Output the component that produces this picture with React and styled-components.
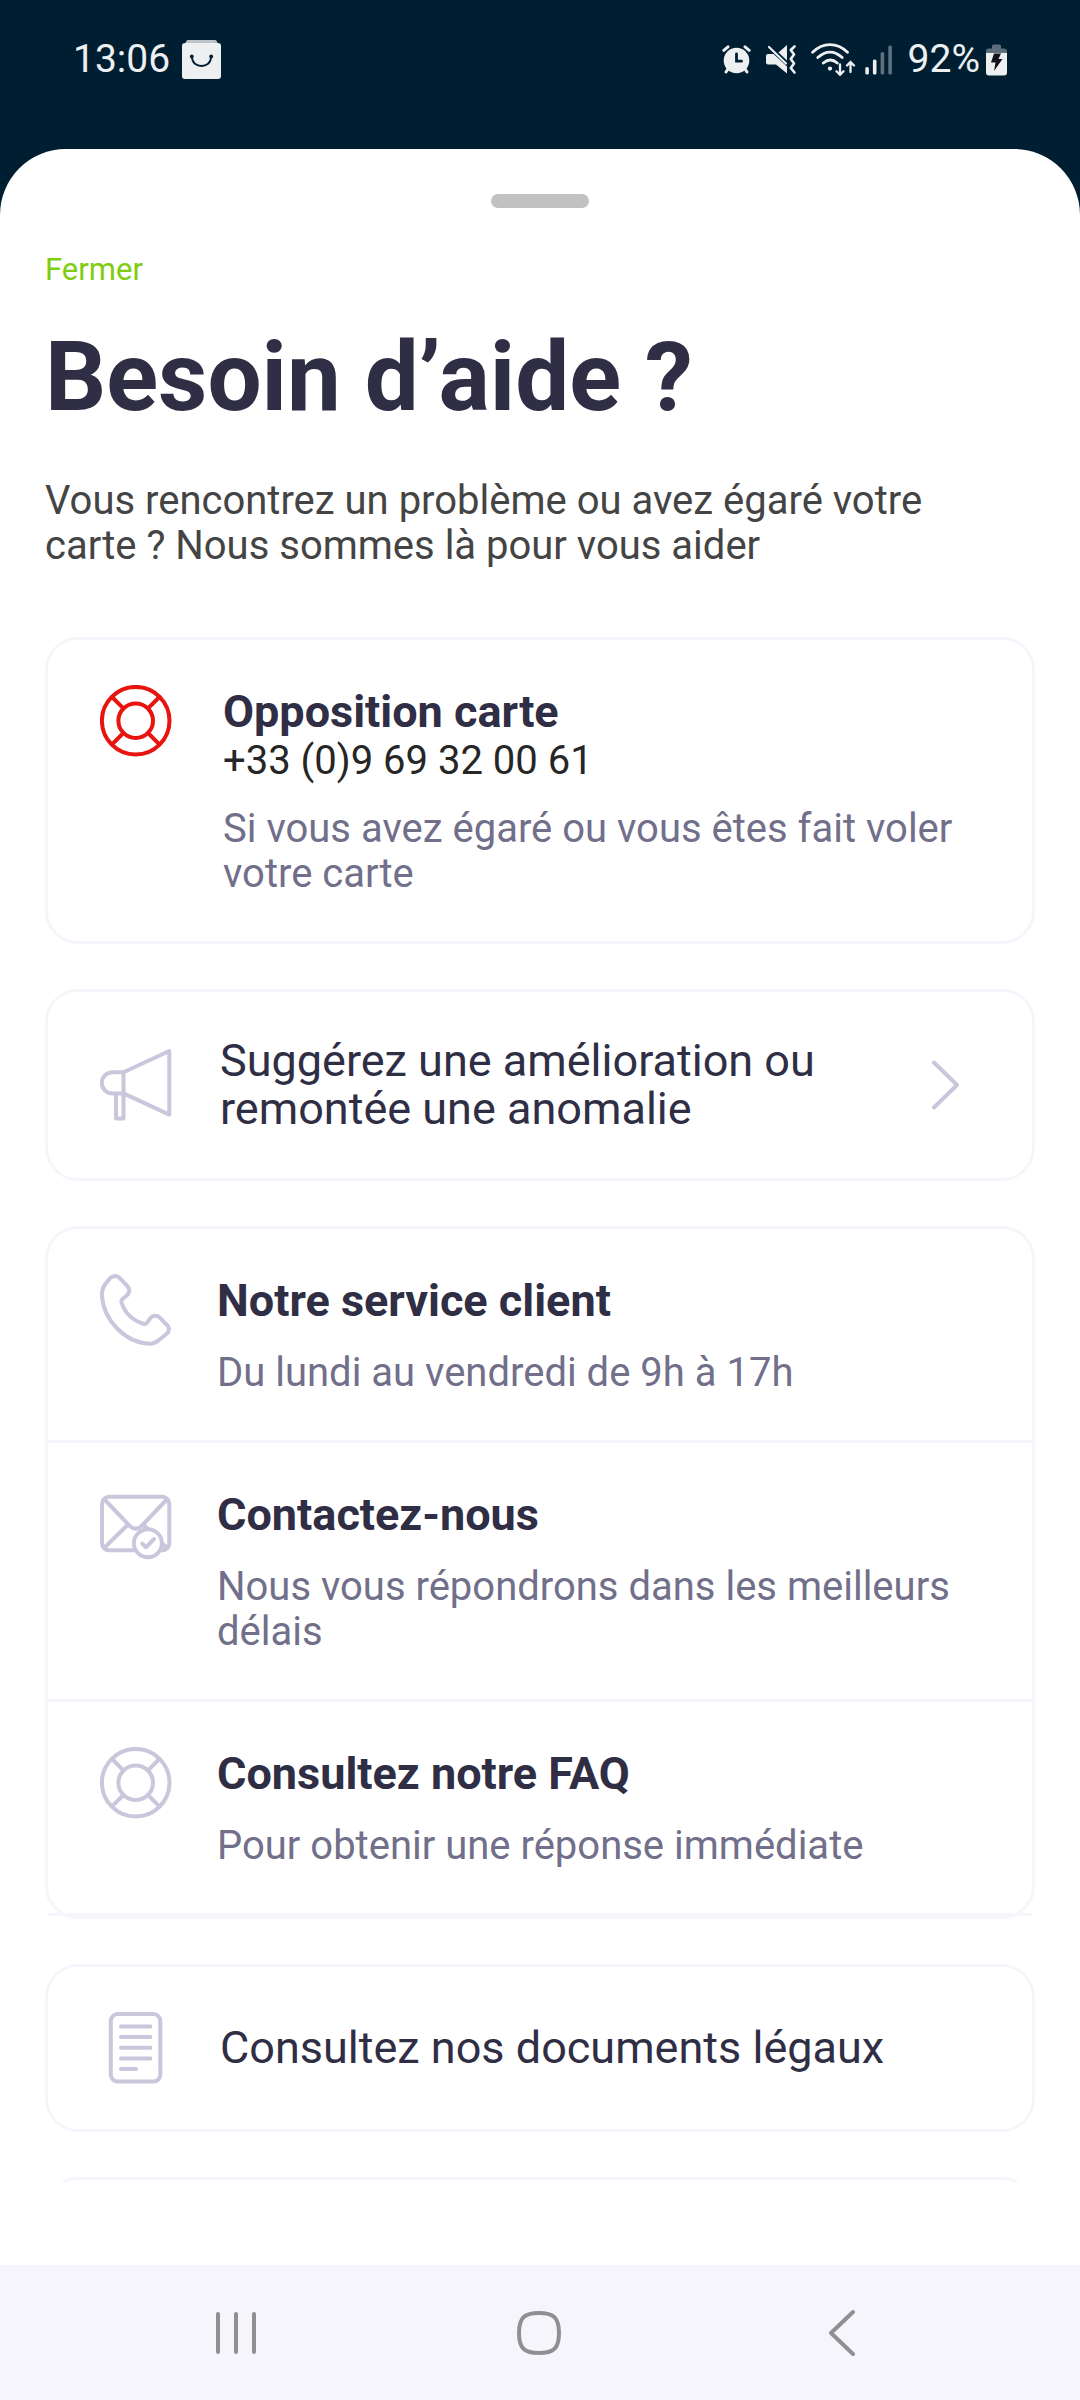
import React from "react";
import styled, { createGlobalStyle } from "styled-components";

const GlobalStyle = createGlobalStyle`
  *, *::before, *::after { box-sizing: border-box; }
  body { margin: 0; background: #001e32; font-family: Roboto, "Noto Sans", sans-serif; }
  h1, h2, p { margin: 0; }
  a { color: inherit; text-decoration: none; }
  button { border: 0; padding: 0; background: none; font: inherit; color: inherit; cursor: pointer; }
  svg { display: block; flex: none; }
`;

const Screen = styled.div`
  display: flex;
  flex-direction: column;
  height: 100vh;
`;

const StatusBar = styled.div`
  display: flex;
  justify-content: space-between;
  padding: 36px 73px 66px;
  color: #eeeff1;
  font-size: 39px;
  line-height: 47px;
`;

const StatusGroup = styled.div`
  display: flex;
  align-items: center;
  gap: ${(p) => p.$gap}px;
`;

const Sheet = styled.main`
  flex: 1;
  min-height: 0;
  display: flex;
  flex-direction: column;
  align-items: stretch;
  padding: 45px 45px 83px;
  background: #fff;
  border-radius: 66px 66px 0 0;
`;

const Handle = styled.div`
  align-self: center;
  flex: none;
  width: 98px;
  height: 14px;
  border-radius: 7px;
  background: #c1c1c1;
`;

const CloseButton = styled.button`
  align-self: flex-start;
  margin-top: 43px;
  color: #80cc10;
  font-size: 31px;
  line-height: 37px;
`;

const Heading = styled.h1`
  margin-top: 33px;
  color: #2f2e45;
  font-size: 96px;
  font-weight: 700;
  line-height: 112px;
`;

const Intro = styled.p`
  margin-top: 45px;
  color: #444;
  font-size: 40px;
  line-height: 45px;
`;

const CardList = styled.div`
  flex: 1;
  min-height: 0;
  display: flex;
  flex-direction: column;
  gap: 45px;
  margin-top: 69px;
  overflow: hidden;
`;

const Card = styled.section`
  flex: none;
  min-height: 96px;
  border: 3px solid #f6f5fb;
  border-radius: 33px;
`;

const Row = styled.a`
  display: flex;
  align-items: ${(p) => (p.$centered ? "center" : "flex-start")};
  gap: ${(p) => p.$gap}px;
  padding: 45px 52px;
`;

const GroupRow = styled(Row)`
  border-bottom: 3px solid #f6f5fb;
`;

const RowIcon = styled.svg`
  width: 72px;
  height: 72px;
  fill: none;
  stroke: ${(p) => (p.$alert ? "#e81410" : "#c8c7dc")};
  stroke-width: 4;
  stroke-linecap: round;
  stroke-linejoin: round;
`;

const RowText = styled.div`
  flex: 1;
  min-width: 0;
`;

const RowTitle = styled.h2`
  color: #2f2e45;
  font-size: 45px;
  font-weight: 700;
  line-height: 53px;
`;

const Phone = styled.p`
  color: #262626;
  font-size: 40px;
  line-height: 45px;
`;

const Description = styled.p`
  margin-top: 23px;
  color: #716f8a;
  font-size: 40px;
  line-height: 45px;
`;

const RowLabel = styled.p`
  flex: 1;
  min-width: 0;
  color: #2f2e45;
  font-size: 45px;
  line-height: 48px;
`;

const ChevronBox = styled.span`
  padding: 0 20px;
`;

const NavBar = styled.nav`
  display: grid;
  grid-template-columns: repeat(3, 1fr);
  padding: 0 87px 0 85px;
  background: #f6f5fb;
`;

const NavButton = styled.button`
  display: flex;
  align-items: center;
  justify-content: center;
  height: 135px;
`;

const Lifebuoy = ({ alert }) => (
  <RowIcon viewBox="0 0 72 72" $alert={alert} aria-hidden="true">
    <circle cx="35.7" cy="35.7" r="33.8" />
    <circle cx="35.7" cy="35.7" r="17.3" />
    <path d="M23.4 23.4 12 12M48 23.4 59.4 12M23.4 48 12 59.4M48 48 59.4 59.4" />
  </RowIcon>
);

const Megaphone = () => (
  <RowIcon viewBox="0 0 72 72" aria-hidden="true">
    <path d="M23.5 23.2H12.4a10.6 10.6 0 0 0 0 21.2h11.1zM23.5 23.2 69.3 2v63.6L23.5 44.4M16 44.4v25h7.5v-25" />
  </RowIcon>
);

const Handset = () => (
  <RowIcon viewBox="0 0 72 72" aria-hidden="true">
    <path d="M20 4.3C17.5 1.5 13 1.2 10 4.2L5 10.5C2.5 14 1.8 17 1.8 21C3.5 47 26 69.5 50.7 69.7C54 69.5 56.5 68.3 58.6 66.3L66.5 60C69.5 57 69.8 53.5 67 51L60.4 44.3C57.5 41 53 41 50.5 44L47.5 48.2C46.5 49.5 45 50.2 43.5 49.8C33 46.5 25 39.5 21.6 28.5C21.2 27 21.5 26 22.5 25L27 21.3C30 18.5 30 14.8 27.3 12Z" />
  </RowIcon>
);

const Envelope = () => (
  <RowIcon viewBox="0 0 72 72" aria-hidden="true">
    <path d="M34 62.3H9a7 7 0 0 1-7-7V15.8a7 7 0 0 1 7-7h53.3a7 7 0 0 1 7 7v39.5a7 7 0 0 1-7 7h-1" />
    <path d="M4.5 11.5 30 38.2q5.7 4.8 11.4 0L66.8 11.5M4.3 59.7 27.5 37M43.8 37l3.4 3.4M63 56l3.8 3.7" />
    <circle cx="47.9" cy="55.2" r="14" />
    <path d="m42.2 55.6 3.8 3.7 8-8.3" />
  </RowIcon>
);

const Document = () => (
  <RowIcon viewBox="0 0 72 72" aria-hidden="true">
    <rect x="10.8" y="2" width="49.5" height="67.6" rx="7" />
    <path d="M21 14.4h29.4M21 25h29.4M21 35.7h29.4M21 46.4h29.4M21 57h15" />
  </RowIcon>
);

const Chevron = () => (
  <ChevronBox>
    <svg width="29" height="50" viewBox="0 0 29 50" fill="none" stroke="#c8c7dc" strokeWidth="4" strokeLinecap="round" strokeLinejoin="round" aria-hidden="true">
      <path d="M3 2.5 26 25 3 47.5" />
    </svg>
  </ChevronBox>
);

const BagIcon = () => (
  <svg width="39" height="39" viewBox="0 0 39 39" aria-hidden="true">
    <path d="M3 4 4.5.8Q5 0 6 0h27q1 0 1.5.8L36 4z" fill="#bcc3ca" />
    <rect y="3" width="39" height="36" rx="3" fill="#eeeff1" />
    <path d="M10 17c0 12 19 12 19 0" fill="none" stroke="#001e32" strokeWidth="1.8" />
    <circle cx="9.8" cy="16.5" r="1.9" fill="#001e32" />
    <circle cx="29.2" cy="16.5" r="1.9" fill="#001e32" />
  </svg>
);

const AlarmIcon = () => (
  <svg width="29" height="29" viewBox="0 0 29 29" fill="none" stroke="#eeeff1" strokeWidth="3" strokeLinecap="round" aria-hidden="true">
    <circle cx="14.5" cy="15.5" r="12.8" fill="#eeeff1" stroke="none" />
    <path d="M1.8 5.3 6 1.8M27.2 5.3 23 1.8M6 24l-2 3M23 24l2 3" />
    <path d="M14.5 9v7.2h5" stroke="#001e32" strokeWidth="2.8" />
  </svg>
);

const MuteIcon = () => (
  <svg width="30" height="29" viewBox="0 0 30 29" fill="#eeeff1" aria-hidden="true">
    <path d="M0 11q0-2 2-2h5.5L21 21.5V28.5L10 19.5H2q-2 0-2-2z" />
    <path d="M12.5 7.5 21 0v15.5z" />
    <path d="M3 2 20 18.5" stroke="#eeeff1" strokeWidth="2.2" strokeLinecap="round" />
    <path d="M28.5 1.5 24.8 5l3.2 4.5-3.2 4.500 3.200 4.500-3.200 4.500 3.700 4.500" fill="none" stroke="#eeeff1" strokeWidth="2.6" strokeLinecap="round" strokeLinejoin="round" />
  </svg>
);

const WifiIcon = () => (
  <svg width="45" height="33" viewBox="0 0 45 33" fill="none" stroke="#eeeff1" strokeWidth="2.8" strokeLinecap="round" aria-hidden="true">
    <path d="M1.6 9.2C12-1 26-1 36.5 9.2M6.8 14.5C14.5 7.5 23.5 7.5 31.2 14.5M12.3 20c4.5-3.8 9.5-3.8 14 0" />
    <circle cx="19" cy="25.6" r="2.1" fill="#eeeff1" stroke="none" />
    <path d="M29 21.5v10M25.5 28.3l3.5 3.5 3.5-3.5M39.5 29V19M36 22.5l3.5-3.5 3.5 3.5" strokeWidth="2.3" />
  </svg>
);

const SignalIcon = () => (
  <svg width="28" height="30" viewBox="0 0 28 30" fill="#eeeff1" aria-hidden="true">
    <rect x="0.3" y="22" width="3.6" height="7.5" rx="1.5" />
    <rect x="7.9" y="14.5" width="3.6" height="15" rx="1.5" />
    <g opacity="0.4">
      <rect x="15.6" y="7" width="3.6" height="22.5" rx="1.5" />
      <rect x="23.3" y="0.5" width="3.6" height="29" rx="1.5" />
    </g>
  </svg>
);

const BatteryIcon = () => (
  <svg width="21" height="32" viewBox="0 0 21 32" aria-hidden="true">
    <path d="M0 9V7.5q0-3 3-3h3V2q0-1.5 1.5-1.5h6Q15 .5 15 2v2.5h3q3 0 3 3V9z" fill="#5b6d7b" />
    <path d="M0 9h21v19.5q0 3-3 3H3q-3 0-3-3z" fill="#eeeff1" />
    <path d="M8 9.5h7l-2.500 5.500H16.500L8 27l1.500-8.500H5z" fill="#101418" />
  </svg>
);

const navIcon = {
  width: 46,
  height: 48,
  viewBox: "0 0 46 48",
  fill: "none",
  stroke: "#909092",
  strokeWidth: 4,
  strokeLinecap: "round",
  strokeLinejoin: "round",
  "aria-hidden": true,
};

export default function App() {
  return (
    <>
      <GlobalStyle />
      <Screen>
        <StatusBar>
          <StatusGroup $gap={12}>
            <time>13:06</time>
            <BagIcon />
          </StatusGroup>
          <StatusGroup $gap={15}>
            <AlarmIcon />
            <MuteIcon />
            <StatusGroup $gap={9}>
              <WifiIcon />
              <SignalIcon />
            </StatusGroup>
            <StatusGroup $gap={6}>
              <span>92%</span>
              <BatteryIcon />
            </StatusGroup>
          </StatusGroup>
        </StatusBar>
        <Sheet>
          <Handle />
          <CloseButton type="button">Fermer</CloseButton>
          <Heading>Besoin d’aide ?</Heading>
          <Intro>{"Vous rencontrez un problème ou avez égaré votre carte\u00a0? Nous sommes là pour vous aider"}</Intro>
          <CardList>
            <Card>
              <Row href="tel:+33969320061" $gap={51}>
                <Lifebuoy alert />
                <RowText>
                  <RowTitle>Opposition carte</RowTitle>
                  <Phone>+33 (0)9 69 32 00 61</Phone>
                  <Description>Si vous avez égaré ou vous êtes fait voler votre carte</Description>
                </RowText>
              </Row>
            </Card>
            <Card>
              <Row href="#suggestion" $gap={48} $centered>
                <Megaphone />
                <RowLabel>Suggérez une amélioration ou remontée une anomalie</RowLabel>
                <Chevron />
              </Row>
            </Card>
            <Card>
              <GroupRow href="#service-client" $gap={45}>
                <Handset />
                <RowText>
                  <RowTitle>Notre service client</RowTitle>
                  <Description>Du lundi au vendredi de 9h à 17h</Description>
                </RowText>
              </GroupRow>
              <GroupRow href="#contact" $gap={45}>
                <Envelope />
                <RowText>
                  <RowTitle>Contactez-nous</RowTitle>
                  <Description>Nous vous répondrons dans les meilleurs délais</Description>
                </RowText>
              </GroupRow>
              <GroupRow href="#faq" $gap={45}>
                <Lifebuoy />
                <RowText>
                  <RowTitle>Consultez notre FAQ</RowTitle>
                  <Description>Pour obtenir une réponse immédiate</Description>
                </RowText>
              </GroupRow>
            </Card>
            <Card>
              <Row href="#documents" $gap={48} $centered>
                <Document />
                <RowLabel>Consultez nos documents légaux</RowLabel>
              </Row>
            </Card>
            <Card />
          </CardList>
        </Sheet>
        <NavBar>
          <NavButton type="button" aria-label="Applications récentes">
            <svg {...navIcon}>
              <path d="M5 5v38M23 5v38M41 5v38" />
            </svg>
          </NavButton>
          <NavButton type="button" aria-label="Accueil">
            <svg {...navIcon}>
              <path d="M23 4c14 0 20 4 20 20s-6 20-20 20S3 40 3 24 9 4 23 4z" />
            </svg>
          </NavButton>
          <NavButton type="button" aria-label="Retour">
            <svg {...navIcon}>
              <path d="M34 3 12 24l22 21" />
            </svg>
          </NavButton>
        </NavBar>
      </Screen>
    </>
  );
}
